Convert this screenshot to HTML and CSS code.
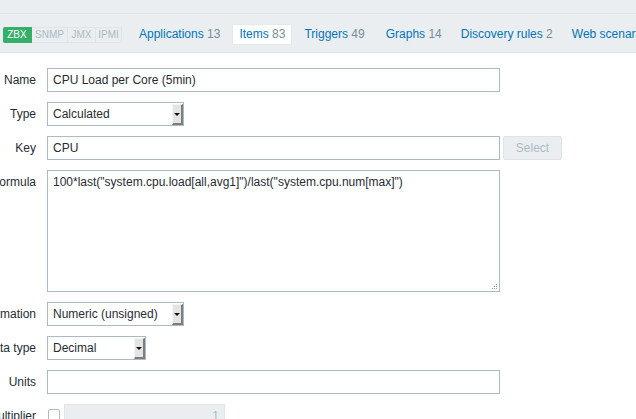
FILE: index.html
```html
<!DOCTYPE html>
<html>
<head>
<meta charset="utf-8">
<link rel="stylesheet" href="styles.css">
</head>
<body>
<div class="header">
  <div class="strip"></div>
  <div class="tabs">
    <div class="badges">
      <span class="badge on zbx">ZBX</span>
      <span class="badge snmp">SNMP</span>
      <span class="badge jmx">JMX</span>
      <span class="badge ipmi">IPMI</span>
    </div>
    <a class="tab first">Applications <span class="count">13</span></a>
    <a class="tab active">Items <span class="count">83</span></a>
    <a class="tab">Triggers <span class="count">49</span></a>
    <a class="tab">Graphs <span class="count">14</span></a>
    <a class="tab">Discovery rules <span class="count">2</span></a>
    <a class="tab">Web scenarios</a>
  </div>
</div>
<div class="form">
  <div class="label">Name</div>
  <div class="field"><div class="input wide">CPU Load per Core (5min)</div></div>

  <div class="label">Type</div>
  <div class="field"><div class="select w137"><span class="sel-text">Calculated</span><span class="arrow"><span class="tri"></span></span></div></div>

  <div class="label">Key</div>
  <div class="field"><div class="input wide">CPU</div><div class="btn">Select</div></div>

  <div class="label">Formula</div>
  <div class="field"><div class="textarea">100*last("system.cpu.load[all,avg1]")/last("system.cpu.num[max]")<svg class="grip" width="6" height="6" viewBox="0 0 6 6"><rect x="4" y="0" width="1" height="1"/><rect x="2" y="2" width="1" height="1"/><rect x="4" y="2" width="1" height="1"/><rect x="0" y="4" width="1" height="1"/><rect x="2" y="4" width="1" height="1"/><rect x="4" y="4" width="1" height="1"/></svg></div></div>

  <div class="label">Type of information</div>
  <div class="field"><div class="select w137"><span class="sel-text">Numeric (unsigned)</span><span class="arrow"><span class="tri"></span></span></div></div>

  <div class="label">Data type</div>
  <div class="field"><div class="select w99"><span class="sel-text">Decimal</span><span class="arrow"><span class="tri"></span></span></div></div>

  <div class="label">Units</div>
  <div class="field"><div class="input wide"></div></div>

  <div class="label">Custom multiplier</div>
  <div class="field mult"><span class="checkbox"></span><div class="input disabled">1</div></div>
</div>
</body>
</html>
```
FILE: styles.css
```css
html, body {
  margin: 0;
  padding: 0;
  overflow: hidden;
  background: #ffffff;
  font-family: "Liberation Sans", Arial, sans-serif;
  font-size: 12px;
  color: #1f2c33;
}
.header {
  background: #ebeef1;
}
.strip {
  height: 13px;
  border-bottom: 1px solid #dfe4e7;
}
.tabs {
  height: 38px;
  border-bottom: 1px solid #dfe4e7;
  display: flex;
  align-items: center;
  padding-left: 3px;
  white-space: nowrap;
  overflow: hidden;
}
.badges {
  display: flex;
  margin-top: 3px;
}
.badge {
  box-sizing: border-box;
  height: 16px;
  line-height: 14px;
  font-size: 10px;
  text-align: center;
  border: 1px solid #dfe4e7;
  border-left: none;
  color: #acbbc2;
  background: #ebeef1;
}
.badge.on {
  background: #34af67;
  border-color: #34af67;
  color: #ffffff;
  border-radius: 2px 0 0 2px;
}
.badge.ipmi { border-radius: 0 2px 2px 0; }
.zbx { width: 29px; }
.snmp { width: 36px; }
.jmx { width: 28px; }
.ipmi { width: 26px; }
.tab {
  box-sizing: border-box;
  height: 21px;
  line-height: 19px;
  padding: 0 6px;
  border: 1px solid transparent;
  color: #0275b8;
  margin-right: 5px;
  margin-top: 2px;
}
.tab.first { margin-left: 10px; }
.tab.active {
  background: #ffffff;
  border-color: #e4e9ec;
}
.tab.active + .tab { margin-right: 7px; }
.count { color: #768d99; }

.form {
  display: grid;
  grid-template-columns: 36px 1fr;
  column-gap: 11px;
  row-gap: 10px;
  padding-top: 15px;
}
.label {
  display: flex;
  justify-content: flex-end;
  align-items: flex-start;
  white-space: nowrap;
  height: 24px;
  line-height: 24px;
}
.field {
  display: flex;
  align-items: flex-start;
}
.input {
  box-sizing: border-box;
  height: 24px;
  line-height: 22px;
  border: 1px solid #acbbc2;
  padding: 0 5px;
  background: #ffffff;
  white-space: nowrap;
}
.wide { width: 453px; }
.btn {
  box-sizing: border-box;
  margin-left: 3px;
  width: 59px;
  height: 24px;
  line-height: 22px;
  text-align: center;
  border: 1px solid #dfe4e7;
  background: #ebeef1;
  color: #acbbc2;
  border-radius: 2px;
}
.select {
  box-sizing: border-box;
  height: 24px;
  border: 1px solid #acbbc2;
  background: #ffffff;
  display: flex;
  align-items: stretch;
}
.w137 { width: 137px; }
.w99 { width: 99px; }
.sel-text {
  flex: 1;
  line-height: 22px;
  padding-left: 5px;
  white-space: nowrap;
  overflow: hidden;
}
.arrow {
  box-sizing: border-box;
  width: 11px;
  margin: 1px 0 0 0;
  background: #e4e4e4;
  border-left: 1px solid #f4f4f4;
  border-top: 1px solid #f4f4f4;
  border-right: 2px solid #7d7d7d;
  border-bottom: 2px solid #7d7d7d;
  display: flex;
  align-items: center;
  justify-content: center;
}
.tri {
  width: 0;
  height: 0;
  border-left: 3px solid transparent;
  border-right: 3px solid transparent;
  border-top: 3px solid #111111;
}
.textarea {
  box-sizing: border-box;
  position: relative;
  width: 453px;
  height: 122px;
  border: 1px solid #acbbc2;
  padding: 4px 5px;
  line-height: 15px;
  white-space: nowrap;
}
.grip {
  position: absolute;
  right: 1px;
  bottom: 1px;
  fill: #a0a0a0;
}
.mult {
  align-items: flex-start;
}
.checkbox {
  box-sizing: border-box;
  width: 12px;
  height: 12px;
  border: 1px solid #acbbc2;
  border-radius: 2px;
  margin: 5px 4px 0 1px;
  background: #ffffff;
}
.input.disabled {
  width: 161px;
  background: #ebeef1;
  border-color: #dfe4e7;
  color: #acbbc2;
  text-align: right;
}
```
